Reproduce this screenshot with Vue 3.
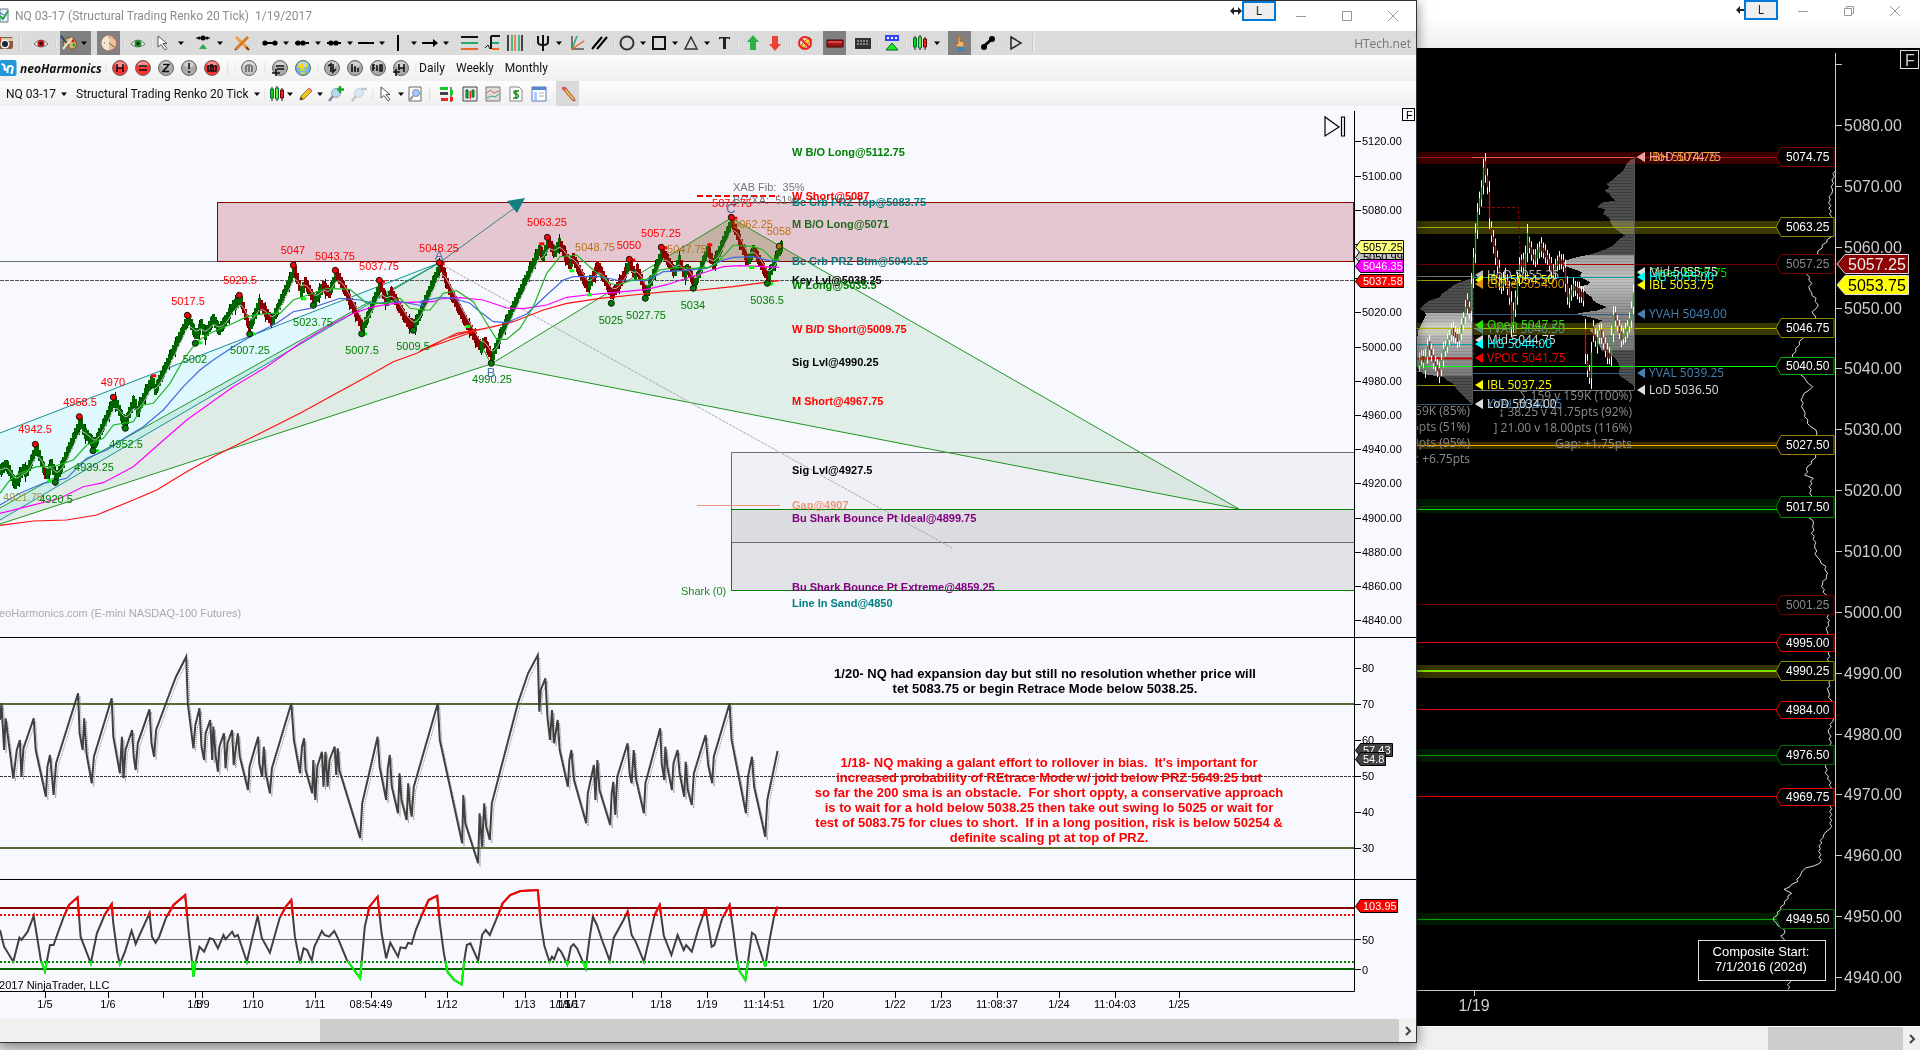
<script setup>
const scale = (raw, ox, oy, sx = 3, sy = 3) =>
  raw.trim().split(/\s+/).map((p) => {
    const [x, y] = p.split(',').map(Number)
    return [+(ox + x / sx).toFixed(1), +(oy + y / sy).toFixed(1)]
  })
const line = (pts) => pts.map((p) => p.join(',')).join(' ')

/* ---------- toolbars ---------- */
const caret = '<path d="M5 6.500h6l-3 3.500z" fill="#000"/>'
const sep = '<path d="M8 -3v22" stroke="#b4b4b4"/><path d="M9 -3v22" stroke="#fff"/>'
const candles = '<path d="M3 1v14M8 0v15M13 2v13" stroke="#111"/><path d="M1.500 3h3v9h-3z" fill="#0d0" stroke="#063"/><path d="M6.500 2h3v11h-3z" fill="#6e3" stroke="#063"/><path d="M11.500 4h3v8h-3z" fill="#e22" stroke="#600"/>'
const eye = (c) => `<path d="M1 9q7-8 14 0q-7 6-14 0z" fill="#fff" stroke="#666"/><circle cx="8" cy="8.500" r="3.600" fill="${c}"/><circle cx="8" cy="8.500" r="1.500" fill="#111"/>`
const nodes = (xs) => `<path d="M1 8h14" stroke="#000" stroke-width="2"/>` + xs.map((x) => `<circle cx="${x}" cy="8" r="2.600"/>`).join('')
const ball = (c, inner, ink = '#111') => `<circle cx="8" cy="8" r="7.500" fill="${c}" stroke="#666"/><ellipse cx="8" cy="4.500" rx="5" ry="3" fill="#fff" opacity=".45"/><g stroke="${ink}" fill="none" stroke-width="1.600">${inner}</g>`
const grayBall = (inner) => ball('#a9a9a9', inner)
const pencil = '<path d="M2 14l1-4 8-8 3 3-8 8z" fill="#f5c518" stroke="#875"/><path d="M2 14l1-3 2 2z" fill="#222"/><path d="M10 3l3 3 1.500-1.500-3-3z" fill="#e77"/>'
const lens = (x) => `<circle cx="8" cy="7" r="4.500" fill="#b6d8f3" stroke="#8aa"/><path d="M5 10l-4 5" stroke="#889" stroke-width="2.500"/>${x}`
const cursor = '<path d="M2 1v11l3-2.500 4 5.500 2-1.500-4-5h4z" fill="#fff" stroke="#555"/>'
const icons = {
  c: caret, s: sep, candles, pencil, cursor,
  camera: '<rect x="-1" y="2" width="15" height="12" rx="2" fill="#8a5a3a"/><path d="M-1 3h15v3h-15z" fill="#d9c7a8"/><circle cx="6" cy="9" r="4.500" fill="#eee"/><circle cx="6" cy="9" r="3" fill="#223"/><path d="M0 2h2v4h-2z" fill="#c33"/>',
  eyeR: eye('#c01818'), eyeG: eye('#189a28'),
  palette: '<path d="M3 5q6-5 11 0q4 7-2 9q-3 1-4-2q-5 1-6-2z" fill="#d9b26a" stroke="#7a5520"/><circle cx="12" cy="6" r="1.500" fill="#c22"/><circle cx="13" cy="10" r="1.500" fill="#2a2"/><path d="M0 1l8 10" stroke="#247" stroke-width="2"/><path d="M2 14l9-11" stroke="#e8e0c0" stroke-width="2"/>',
  disc: '<circle cx="8" cy="8" r="7.500" fill="#e8c79a" stroke="#c66"/><path d="M8 .5a7.500 7.500 0 0 0 0 15z" fill="#f5e6d2"/><path d="M8 8l5 4M8 2v1M3 8h1M12 4l1-1" stroke="#555"/>',
  node: '<path d="M1 3h14" stroke="#000"/><circle cx="4" cy="3" r="1.500"/><circle cx="8" cy="3" r="2.500"/><circle cx="12" cy="3" r="1.500"/><path d="M8 9l4 5H4z" fill="#2aa84a"/>',
  cross: '<path d="M2 2l12 12" stroke="#e6a23c" stroke-width="3"/><path d="M14 2L2 14" stroke="#d97a2b" stroke-width="3"/><path d="M12 12l3 3M2 14l-1 1" stroke="#833" stroke-width="2"/>',
  l1: nodes([3, 13]), l2: nodes([4, 9]), l3: nodes([5, 10]),
  l4: '<path d="M0 8h16" stroke="#000" stroke-width="2"/>',
  vert: '<path d="M8 0v16" stroke="#000" stroke-width="2"/>',
  arrow: '<path d="M0 8h12" stroke="#000" stroke-width="2"/><path d="M11 4l5 4-5 4z"/>',
  hl: '<path d="M0 2h17" stroke="#111" stroke-width="2"/><path d="M0 8h17" stroke="#2a6" stroke-width="2"/><path d="M0 14h17" stroke="#e62" stroke-width="2"/>',
  fib: '<path d="M7 1h9M7 1v13" stroke="#111" stroke-width="2"/><path d="M8 8h7" stroke="#2a6" stroke-width="2"/><path d="M8 14h7" stroke="#e62" stroke-width="2"/><path d="M1 13l3-3 2 4" fill="none" stroke="#111"/>',
  vl: '<path d="M1 0v16M15 0v16" stroke="#111" stroke-width="1.500"/><path d="M5 0v16" stroke="#2a6" stroke-width="1.500"/><path d="M8 0v16" stroke="#e62" stroke-width="1.500"/><path d="M12 0v16" stroke="#2a6" stroke-width="1.500"/>',
  fork: '<path d="M3 1v6q0 3 5 3t5-3V1M8 0v16" fill="none" stroke="#111" stroke-width="2"/>',
  fan: '<path d="M3 1v13h12" fill="none" stroke="#555" stroke-width="1.500"/><path d="M3 14L8 1" stroke="#2a6" stroke-width="1.500"/><path d="M3 14L15 6" stroke="#e62" stroke-width="1.500"/>',
  par: '<path d="M1 14L11 2M6 14L16 2" stroke="#000" stroke-width="2"/>',
  circle: '<circle cx="8" cy="8" r="6.500" fill="none" stroke="#333" stroke-width="2"/>',
  square: '<path d="M2 2h12v12H2z" fill="none" stroke="#111" stroke-width="2"/>',
  tri: '<path d="M8 2l6 12H2z" fill="none" stroke="#333" stroke-width="1.500"/>',
  text: '<path d="M3 2h11v3l-1-1.500H10V14h-3V3.500H4L3 5z" fill="#222"/>',
  up: '<path d="M8 0l6 7h-3v8H5V7H2z" fill="#2fb14a"/>',
  down: '<path d="M8 16l6-7h-3V1H5v8H2z" fill="#ee4035"/>',
  noPen: '<path d="M4 13l1-4 7-7 3 3-7 7z" fill="#fc3" stroke="#a63"/><circle cx="8" cy="8" r="6" fill="none" stroke="#e22" stroke-width="2"/><path d="M4 4l8 8" stroke="#e22" stroke-width="2"/>',
  minus: '<path d="M0 5h16v7H0z" fill="#a01818" stroke="#400"/><path d="M1 6h14v2H1z" fill="#d44"/>',
  meter: '<path d="M0 3h16v11H0z" fill="#333"/><path d="M3 5v6M6 5v6M9 5v6M12 5v6" stroke="#ddd" stroke-dasharray="2 1"/>',
  tri2: '<path d="M1 0h14v6H1z" fill="#34f"/><path d="M3 3h2M7 3h2M11 3h2" stroke="#fff" stroke-width="2"/><path d="M8 8l6 7H2z" fill="#1e1" stroke="#063"/>',
  hand: '<path d="M6 1h2v5l4 1v5H5L3 8l3 1z" fill="#f2b27c" stroke="#a62"/><path d="M5 12h7v4H5z" fill="#38b"/>',
  bone: '<path d="M3 12l9-8" stroke="#000" stroke-width="3"/><circle cx="4" cy="12" r="3"/><circle cx="12" cy="4" r="3"/>',
  play: '<path d="M3 2l10 6-10 6z" fill="none" stroke="#222" stroke-width="1.500"/>',
  logo: '<rect x="-1" y="0" width="17" height="16" rx="2" fill="#2196d8"/><path d="M1 4q4 1 3 4t3 1v4M7 9q0-3 3-3t2 3l-1 5" fill="none" stroke="#fff" stroke-width="2"/>',
  bH: ball('#f33', '<path d="M5 4v8M11 4v8M5 8h6"/>'), bE: ball('#f33', '<path d="M4 6h8M4 10h8"/>'),
  bZ: grayBall('<path d="M5 4.500h6l-6 7h6"/>'), bX: grayBall('<path d="M8 3v6M8 11v2"/>'),
  bC: ball('#f33', '<path d="M4 6h8v5H4zM6 5h3"/><circle cx="8" cy="8.500" r="1.500"/>'),
  bn: ball('#c4c4c4', '<path d="M5 12V7q0-2 3-2t3 2v5M8 6v6"/>', '#666'),
  bG: grayBall('<path d="M4 6h8M5 9h7M0 13h8M4 9v7"/>'),
  bA: ball('#6bb8ee', '<path d="M3 8l2-4 1 4M7 4v4h2M10 4h3M11.500 4v4" stroke="#fd0"/><path d="M5 10h6M6 13h4" stroke="#fd0"/>'),
  b1: grayBall('<path d="M4 6l3-2v8M9 4v8l3-3"/>'), b2: grayBall('<path d="M5 4v8M8 6v6M11 8v4"/>'),
  b3: grayBall('<path d="M3 11V5h2M3 8h2M7 5v6M10 5v6h2V5z"/>'), b4: grayBall('<path d="M6 4v6M11 4v8M6 8h5M0 12h7M3 9v7"/>'),
  zin: lens('<path d="M12 0v7M9 3.500h7" stroke="#1a2" stroke-width="2.500"/>'),
  zout: `<g opacity=".45">${lens('<path d="M10 3h6" stroke="#888" stroke-width="2.500"/>')}</g>`,
  page: '<path d="M2 1h12v14H2z" fill="#fff" stroke="#666"/><circle cx="9" cy="7" r="3.500" fill="#9cf" stroke="#88a"/><path d="M6 10l-3 4" stroke="#889" stroke-width="2"/>',
  ladder: '<path d="M1 1h8v3H1z" fill="#1c2"/><path d="M1 6h8v3H1z" fill="#444"/><path d="M2 12h7v3H2z" fill="#e22"/><path d="M12 1v15" stroke="#111"/><path d="M11 4h3v5h-3z" fill="#1c2"/><path d="M11 11h3v4h-3z" fill="#e22"/>',
  cbox: '<path d="M1 1h14v14H1z" fill="#e8e8e8" stroke="#444"/><path d="M4 4h2v8H4zM10 4h2v7h-2z" fill="#1b2" stroke="#063"/><path d="M7.500 5h1.500v8H7.500z" fill="#e22"/>',
  area: '<path d="M1 1h14v14H1z" fill="#ddd" stroke="#777"/><path d="M2 7l3-3 4 3 5-2" fill="none" stroke="#d55"/><path d="M2 12l4-2 4 1 4-3" fill="none" stroke="#3a6"/>',
  cash: '<path d="M2 1h9l3 3v11H2z" fill="#fff" stroke="#888"/><path d="M11 5H7q-2 1 0 3h2q3 2 0 4H5M8 4v9" fill="none" stroke="#282" stroke-width="1.500"/>',
  panel: '<path d="M1 1h14v14H1z" fill="#fff" stroke="#57b"/><path d="M1 1h14v3H1z" fill="#58c"/><path d="M3 6h3v8H3z" fill="#acf"/><path d="M8 7h5M8 10h5" stroke="#aaa"/>',
  pen2: '<path d="M2 2l3-1 9 11 1 3-3-1z" fill="#f5b53a" stroke="#955"/><path d="M2 2l3-1 2 2-3 2z" fill="#e55"/>',
}
const parse = (s) => s.split(' ').map((t) => {
  const [name, w, on] = t.split(':')
  return { name, w: +w, on: !!on }
})
const drawTools = parse('camera:14 s:12 s:4 eyeR:22 s:8 palette:17:1 c:14:1 s:6 disc:23:1 s:8 eyeG:20 s:8 cursor:16 c:18 s:2 node:22 c:12 s:4 cross:24 s:8 l1:16 c:16 l2:16 c:16 l3:16 c:16 l4:16 c:16 vert:16 c:16 arrow:16 c:16 s:4 hl:22 fib:24 vl:22 s:8 fork:18 c:14 fan:22 par:22 s:8 circle:18 c:14 square:18 c:14 tri:18 c:14 text:20 s:8 up:22 down:22 s:8 noPen:22 s:7 minus:23:1 s:6 meter:22 s:8 tri2:20 s:8 candles:20 c:14 s:4 hand:23:1 s:5 bone:24 s:6 play:20 s:14')
const neoTools = parse('s:6 bH:22 bE:24 bZ:22 bX:24 bC:22 s:10 s:4 bn:24 s:8 bG:22 bA:24 s:6 b1:22 b2:24 b3:22 b4:24 s:6')
const viewTools = parse('s:8 candles:16 c:10 pencil:22 c:6 zin:26 zout:20 s:8 cursor:20 c:8 page:20 s:10 ladder:24 cbox:22 area:24 cash:22 panel:24 s:5 pen2:23:1')

/* ---------- price panel ---------- */
const priceTicks = Array.from({ length: 15 }, (_, i) => 5120 - i * 20).map((p) => ({ p: p.toFixed(2), y: Math.round(620.3 - (p - 4840) * 1.71) }))
const swing = scale('0,900 15,885 25,905 41,945 65,900 75,910 106,835 135,920 150,885 165,925 185,880 238,755 250,790 280,825 300,780 340,690 365,750 375,755 398,690 408,725 452,630 462,660 480,620 562,445 585,500 600,465 612,495 635,450 655,480 680,440 695,410 718,390 745,475 775,400 812,455 880,300 900,370 912,340 940,395 965,350 985,370 1006,310 1085,475 1138,345 1155,400 1170,370 1220,460 1242,465 1318,285', 0, 170)
  .concat(scale('148,340 190,420 240,505 250,485 272,535 300,460 415,210 425,230 442,185 460,220 475,190 505,255 515,235 560,325 590,260 632,345 650,320 688,250 700,290 708,270 735,340 784,215 820,280 835,240 850,290 860,265 880,315 920,210 937,255 992,125 1040,245 1058,210 1100,295 1138,205', 400, 180))
const bricks = []
for (let x = 0; x < 781; x += 2) {
  let i = swing.findIndex((p) => p[0] > x)
  if (i < 1) i = swing.length - 1
  const [x0, y0] = swing[i - 1]
  const [x1, y1] = swing[i]
  const y = Math.round(y0 + ((y1 - y0) * (x - x0)) / (x1 - x0))
  const down = (x > 240 || x === 44) && y1 > y0
  const wick = (x * 7) % 10 > 5 ? 8 : 5
  bricks.push({ x, y: y - 6, c: down ? '#8b0000' : x > 590 && x < 625 ? '#8b0000' : '#006400', wick, mid: y })
}
let ema = bricks[0].mid
const emaLine = bricks.map((b) => { ema += (b.mid - ema) * 0.3; return [b.x, ema.toFixed(1)] })
const averages = [
  ['#ff1010', '0,1066 100,1053 200,1050 290,1035 400,990 470,960 560,905 650,855 710,825 800,780 900,730 1000,675 1100,620 1180,575 1250,550 1310,520 1370,490 1440,478', '60,512 140,475 200,457 280,440 340,425 430,390 500,370 600,355 700,345 800,335 900,330 1000,320 1090,308 1138,302'],
  ['#ff00ff', '0,1030 80,1010 180,985 250,950 310,938 400,890 480,820 560,750 700,650 800,590 900,520 1000,460 1060,430 1120,410 1200,398 1300,395', '120,357 180,353 250,360 320,384 370,386 440,375 500,352 560,345 640,338 740,328 800,314 860,295 920,275 970,260 1020,257 1138,262'],
  ['#4169e1', '0,1005 60,970 130,940 200,925 260,865 320,840 380,800 430,770 490,720 550,650 600,600 640,570 700,530 760,495 830,460 880,425 930,415 1020,385 1080,390 1120,400 1200,395 1270,408', '60,365 120,352 160,355 210,370 240,395 280,425 320,428 380,402 440,345 490,300 520,290 600,290 650,300 740,302 790,275 850,272 920,265 970,240 1000,232 1060,230 1120,245 1138,243'],
  ['#1fb41f', '0,970 30,930 60,910 110,890 160,890 220,870 260,825 310,805 340,765 400,755 430,705 460,700 510,640 550,570 590,515 630,490 700,460 740,440 800,430 840,430 880,390 940,370 980,355 1050,358 1100,400 1160,400 1200,385 1230,415 1270,420', '90,390 130,340 170,332 220,365 260,430 290,478 320,478 360,445 400,380 440,280 480,230 530,225 580,270 630,310 650,315 700,300 740,298 780,270 830,262 880,265 930,262 960,240 1000,195 1060,200 1090,210 1120,240 1138,238'],
].map(([c, a, b]) => ({ c, pts: line(scale(a, 0, 170).concat(scale(b, 400, 180))) }))
const dots = [
  ['#f00', '562,436 718,376 880,286 1006,301 1138,331 1318,278 340,682 238,740 106,823', 0, 170],
  ['#008000', '166,937 279,842 376,775 586,520 749,492 940,406 1085,491 1240,481', 0, 170],
  ['#f00', '442,172 688,238 784,202 994,112', 400, 180],
  ['#008000', '274,550 634,370 736,355 880,325 1102,310', 400, 180],
  ['#b8700b', '1138,199', 400, 180],
].flatMap(([c, s, ox, oy]) => scale(s, ox, oy).map(([x, y]) => ({ c, x, y })))
const specks = [
  ['#f00', '460,616 566,437 1146,334 1325,279', 0, 170], ['#0f0', '910,385 148,931 598,517 757,490 1092,490 370,769 288,841', 0, 170],
  ['#f00', '424,190 928,193 1003,113 793,202 697,239', 400, 180], ['#0f0', '202,438 514,271 567,343 1054,261 1110,310', 400, 180],
].flatMap(([c, s, ox, oy]) => scale(s, ox, oy).map(([x, y]) => ({ c, x, y })))
const R = '#f00', G = '#008000', O = '#b8731a'
const swingLabels = [
  ['5017.5', 188, 305, R], ['5029.5', 240, 284, R], ['5047', 293, 254, R], ['5043.75', 335, 260, R], ['5037.75', 379, 270, R], ['5048.25', 439, 252, R],
  ['4970', 113, 386, R], ['4958.5', 80, 406, R], ['4942.5', 35, 433, R], ['4921.75', 23, 501, '#a8963a'], ['4920.5', 56, 503, G], ['4939.25', 94, 471, G],
  ['4952.5', 126, 448, G], ['5002', 195, 363, G], ['5007.25', 250, 354, G], ['5023.75', 313, 326, G], ['5007.5', 362, 354, G], ['5009.5', 413, 350, G], ['4990.25', 492, 383, G],
  ['5063.25', 547, 226, R], ['5048.75', 595, 251, O], ['5050', 629, 249, R], ['5057.25', 661, 237, R], ['5047.75', 687, 253, O], ['5074.75', 732, 207, R],
  ['5062.25', 753, 228, O], ['5058', 779, 235, O], ['5025', 611, 324, G], ['5027.75', 646, 319, G], ['5034', 693, 309, G], ['5036.5', 767, 304, G],
]
const levels = [
  ['W B/O Long@5112.75', 156, G], ['Bc Crb PRZ Top@5083.75', 206, '#008080'], ['W Short@5087', 200, R], ['M B/O Long@5071', 228, '#1e6b1e'], ['Bc Crb PRZ Btm@5049.25', 265, '#11787d'],
  ['Key Lvl@5038.25', 284, '#000'], ['W Long@5035.5', 289, G], ['W B/D Short@5009.75', 333, R], ['Sig Lvl@4990.25', 366, '#000'], ['M Short@4967.75', 405, R], ['Sig Lvl@4927.5', 474, '#000'],
  ['Gap@4907', 509, '#e9967a'], ['Bu Shark Bounce Pt Ideal@4899.75', 522, '#800080'], ['Bu Shark Bounce Pt Extreme@4859.25', 591, '#800080'], ['Line In Sand@4850', 607, '#008080'],
]
const tags = [
  { t: '5050.99', y: 257, w: 49, bg: '#c0c0c0', fg: '#000' }, { t: '5057.25', y: 247, w: 49, bg: '#ffff80', fg: '#000' }, { t: '5046.35', y: 266, w: 49, bg: '#ff00ff', fg: '#fff' },
  { t: '5037.58', y: 281, w: 49, bg: '#f00', fg: '#fff' }, { t: '57.43', y: 750, w: 38, bg: '#404040', fg: '#fff' }, { t: '54.8', y: 759, w: 31, bg: '#404040', fg: '#fff' }, { t: '103.95', y: 906, w: 43, bg: '#f00', fg: '#fff' },
]

/* ---------- oscillators ---------- */
const rsi = line(scale('0,240 3,190 8,330 11,235 26,415 33,330 39,300 42,410 46,325 66,235 70,330 90,470 93,380 98,345 105,465 110,370 153,160 156,280 162,330 165,235 170,345 180,430 184,350 219,175 222,290 235,400 239,290 242,415 246,330 259,270 262,350 266,390 270,310 293,208 297,310 302,350 306,270 335,150 345,110 365,50 368,190 379,325 383,255 391,205 395,320 400,360 403,280 412,240 416,360 418,260 423,350 427,395 430,320 439,280 442,385 446,310 455,270 458,375 466,280 470,350 486,450 489,380 506,290 508,370 514,410 517,320 521,400 529,460 533,385 571,190 576,300 588,400 592,320 596,295 599,390 612,460 614,360 618,480 622,380 631,335 634,440 638,335 642,440 646,360 656,320 659,405 662,325 665,390 706,595 710,490 740,290 744,380 757,480 760,385 764,345 768,440 780,520 783,400 787,480 797,540 800,430 803,490 807,530 811,440 858,190 862,300 906,610 908,465 912,550 937,670 940,520 945,620 949,490 953,560 960,600 964,490 1015,190 1035,100 1054,45 1057,215 1060,150 1069,115 1073,230 1078,300 1082,210 1086,310 1093,240 1097,330 1113,440 1116,360 1120,330 1125,420 1149,550 1152,460 1164,375 1167,480 1171,360 1175,450 1196,555 1199,460 1202,425 1206,525 1210,410 1230,310 1234,400 1238,430 1242,330 1247,420 1262,520 1265,430 1294,265 1297,370 1302,420 1304,320 1308,380 1317,450 1320,370 1328,330 1332,400 1341,470 1344,365 1348,450 1356,495 1360,400 1383,285 1388,375 1396,430 1399,350 1430,190 1434,300 1462,520 1466,410 1474,350 1478,440 1500,590 1504,480 1524,333', 0, 640, 1.96, 3))
const stoch = line(scale('0,870 8,920 26,965 38,893 42,900 54,875 66,828 80,960 88,993 98,915 105,915 112,885 125,830 135,795 152,772 158,890 178,970 190,880 205,825 219,792 222,850 230,938 235,972 245,935 258,872 266,912 275,880 293,820 298,890 305,908 312,890 325,835 340,795 363,765 370,880 376,960 379,1010 383,970 391,920 400,935 411,895 418,898 427,925 438,885 442,898 455,875 460,890 466,885 484,965 495,890 505,828 513,893 529,938 548,835 560,800 571,780 578,890 588,970 595,925 602,930 611,962 616,920 631,873 636,885 645,890 655,873 661,890 680,960 706,1015 715,860 724,800 740,770 748,880 757,955 765,908 780,950 785,922 795,925 800,908 807,912 815,870 827,825 840,780 857,767 862,850 870,940 877,995 890,1020 905,1033 910,960 915,915 922,910 937,962 945,885 952,870 960,885 975,830 985,790 1000,765 1020,753 1054,750 1060,850 1067,918 1077,965 1082,950 1086,958 1094,925 1100,935 1112,973 1119,920 1124,913 1131,925 1148,985 1155,900 1162,830 1170,855 1180,900 1195,962 1203,893 1222,840 1230,815 1238,885 1246,905 1262,965 1275,880 1283,825 1293,795 1301,887 1316,945 1328,885 1340,930 1345,915 1356,935 1368,870 1383,805 1395,920 1400,915 1415,838 1430,795 1437,870 1443,940 1448,990 1461,1020 1466,965 1474,878 1480,885 1500,980 1507,910 1517,830 1524,800', 0, 640, 1.96, 3))
const rsiTicks = [80, 70, 60, 50, 40, 30].map((v) => ({ v, y: 848 - (v - 30) * 3.6 }))
const timeTicks = [
  [45, '1/5'], [108, '1/6'], [163, ''], [195, '1/8'], [202, '1/9'], [253, '1/10'], [315, '1/11'], [371, '08:54:49'], [425, ''], [447, '1/12'], [503, ''], [525, '1/13'], [560, '1/15'], [567, '1/16'],
  [575, '1/17'], [632, ''], [661, '1/18'], [707, '1/19'], [764, '11:14:51'], [823, '1/20'], [895, '1/22'], [941, '1/23'], [997, '11:08:37'], [1059, '1/24'], [1115, '11:04:03'], [1179, '1/25'],
]
const noteBlack = ['1/20- NQ had expansion day but still no resolution whether price will', 'tet 5083.75 or begin Retrace Mode below 5038.25.']
const noteRed = ["1/18- NQ making a galant effort to rollover in bias.\u00a0 It's important for", 'increased probability of REtrace Mode w/ jold below PRZ 5649.25 but', 'so far the 200 sma is an obstacle.\u00a0 For short oppty, a conservative approach', 'is to wait for a hold below 5038.25 then take out swing lo 5025 or wait for', 'test of 5083.75 for clues to short.\u00a0 If in a long position, risk is below 50254 &', 'definite scaling pt at top of PRZ.']

/* ---------- market profile window ---------- */
const darkTicks = Array.from({ length: 15 }, (_, i) => 5080 - i * 10).map((p) => ({ p: p.toFixed(2), y: Math.round(125 + (5080 - p) * 6.085) }))
const bands = [[152, 12, '#3f0000'], [221, 13, '#3f3f00'], [323, 12, '#3f3f00'], [442, 7, '#3f3300'], [499, 14, '#001e00'], [665, 13, '#3c3a00'], [749, 13, '#001e00'], [913, 12, '#001e00']]
const rules = [[157, '#b01010'], [227, '#a5a500'], [264, '#700000'], [328, '#b5b500'], [366, '#00ff00'], [445, '#ffa500'], [506, '#004c00'], [509, '#00e000'], [604, '#700000'], [642, '#f00000'], [670, '#60f000'], [671, '#a0d000'], [709, '#f00000'], [755, '#009c00'], [796, '#f00000'], [919, '#00a800']]
const flags = [
  ['5074.75', 157, 19, '#8b0000', '#fff'], ['5063.25', 227, 19, '#8b8b00', '#fff'], ['5057.25', 264, 19, '#700000', '#8a8a8a'], ['5046.75', 328, 19, '#8b8b00', '#fff'], ['5040.50', 366, 17, '#00b000', '#fff'],
  ['5027.50', 445, 19, '#a08000', '#fff'], ['5017.50', 507, 21, '#008c00', '#fff'], ['5001.25', 605, 19, '#700000', '#8a8a8a'], ['4995.00', 643, 17, '#f00000', '#fff'], ['4990.25', 671, 19, '#8b8b00', '#fff'],
  ['4984.00', 710, 17, '#f00000', '#fff'], ['4976.50', 755, 19, '#007000', '#fff'], ['4969.75', 797, 17, '#f00000', '#fff'], ['4949.50', 919, 19, '#007000', '#fff'],
].map(([t, y, h, c, fg]) => ({ t, y, c, fg, d: `M1834 ${y - h / 2}H1781L1776 ${y}L1781 ${y + h / 2}H1834Z` }))
const interp = (pts, y) => {
  const i = pts.findIndex((p) => p[1] >= y)
  if (i < 1) return pts[0][0]
  const [x0, y0] = pts[i - 1], [x1, y1] = pts[i]
  return y1 === y0 ? x1 : x0 + ((x1 - x0) * (y - y0)) / (y1 - y0)
}
const profile = (raw, right, va, vb) => {
  const pts = scale(raw, 1410, 130)
  const rows = []
  for (let y = Math.ceil(pts[0][1]); y < pts[pts.length - 1][1]; y += 1) {
    const x = Math.round(interp(pts, y))
    const lit = y > va && y < vb
    const near = lit ? Math.max(0, 1 - Math.abs(y - (va + (vb - va) * 0.25)) / 45) : 0
    const v = Math.round((lit ? 125 + near * 70 : 78) - (y % 3 === 0 ? 16 : 0))
    rows.push({ y, x, w: right - x, c: `rgb(${v},${v},${v})` })
  }
  return rows
}
const profiles = [
  ...profile('665,85 650,100 640,120 615,140 605,150 590,160 598,170 585,180 597,190 605,200 615,210 575,217 562,230 585,237 580,250 598,262 600,270 610,290 630,305 645,315 630,325 610,345 590,355 560,365 540,372 500,380 465,390 460,404 475,410 490,415 515,425 510,435 520,445 540,455 535,462 500,470 520,478 530,490 545,500 550,510 565,520 590,530 560,540 505,548 505,553 540,560 575,570 560,580 550,590 540,600 550,610 560,620 565,640 575,660 600,670 620,690 630,710 625,730 635,740 650,750 670,765 673,780', 1634, 254, 350),
  ...profile('180,445 150,455 130,465 110,480 95,490 90,500 60,510 45,520 28,535 45,545 48,555 40,570 35,580 25,600 22,620 22,710 40,730 100,740 110,750 130,760 140,775 155,790 170,805 185,820', 1472, 312, 376),
]
const path2 = scale('25,700 35,680 45,700 55,640 70,690 88,730 100,670 125,600 145,630 160,570 170,520 180,550 187,440 195,340 205,230 215,180 223,100 235,180 240,290 250,340 262,400 272,470 285,440 300,500 305,590 318,500 330,400 345,400 352,330 372,390 392,350 410,380 430,430 445,390 460,400 475,510 490,470 520,500 527,690 541,750 548,600 560,640 570,600 590,670 600,680 612,550 635,625 650,600 662,560 673,480', 1410, 130)
const candles2 = []
for (let x = 1419; x <= 1634; x += 2) {
  let i = path2.findIndex((p) => p[0] > x)
  if (i < 1) i = path2.length - 1
  const [x0, y0] = path2[i - 1], [x1, y1] = path2[i]
  const k = (y1 - y0) / (x1 - x0)
  const y = y0 + k * (x - x0)
  const h = Math.min(36, Math.max(7, Math.abs(k) * 2.5)) + ((x * 5) % 7)
  candles2.push({ x: x + 0.5, y, h, c: k < 0 ? '#00d000' : '#f00000' })
}
const marks = [
  ['IBH 5074.75', 157, 1, '#ffa500'], ['HoD 5074.75', 157, 1, '#e8a0a0'], ['Open 5055.75', 273, 1, '#00e000'], ['Mid 5055.75', 272, 1, '#ddd'], ['HG 5055.00', 277, 1, '#00ffff'], ['IBL 5053.75', 285, 1, '#ffff00'],
  ['YVAH 5049.00', 314, 1, '#4682b4'], ['YVAL 5039.25', 373, 1, '#4682b4'], ['LoD 5036.50', 390, 1, '#ddd'],
  ['HoD 5055.25', 275, 0, '#bbb'], ['IBH 5054.50', 280, 0, '#ffff00'], ['Close 5054.00', 284, 0, '#e09010'], ['YVAH 5046.50', 329, 0, '#5c8a8a'], ['Open 5047.25', 325, 0, '#30e000'], ['Mid 5044.75', 340, 0, '#ddd'],
  ['HG 5044.00', 344, 0, '#00ffff'], ['VPOC 5041.75', 358, 0, '#f00'], ['IBL 5037.25', 385, 0, '#ffff00'], ['YVAL 5034.25', 404, 0, '#4682b4'], ['LoD 5034.00', 404, 0, '#ddd'],
].map(([t, y, right, c]) => ({ t, y, c, x: right ? 1637 : 1475 }))
const stats = [
  ['∑ 159 v 159K (100%)', 1632, 400], ['↨ 38.25 v 41.75pts (92%)', 1632, 416], ['] 21.00 v 18.00pts (116%)', 1632, 432], ['Gap: +1.75pts', 1632, 448],
  ['59K (85%)', 1470, 415], ['5pts (51%)', 1470, 431], ['0pts (95%)', 1470, 447], [': +6.75pts', 1470, 463],
]
const composite = line(scale('1276,112 1270,140 1265,180 1258,210 1262,260 1262,320 1240,345 1220,372 1192,432 1203,460 1196,480 1215,505 1222,525 1210,545 1215,560 1176,625 1160,655 1145,683 1170,735 1190,750 1205,770 1175,800 1178,840 1195,880 1215,900 1218,912 1220,975 1195,1010 1187,1035 1207,1045', 1410, 130)
  .concat(scale('1200,120 1203,145 1200,200 1213,215 1207,240 1217,270 1218,300 1245,325 1252,350 1235,370 1245,398 1252,450 1257,470 1248,490 1258,500 1260,543 1253,570 1262,618 1252,645 1262,670 1268,716 1258,745 1262,785 1250,833 1248,855 1260,880 1262,895 1262,1000 1238,1015 1228,1050 1232,1088 1190,1100 1170,1115 1160,1135 1125,1155 1142,1165 1115,1200 1100,1220 1088,1235 1115,1255 1127,1260 1115,1275 1125,1283 1145,1392 1135,1400 1137,1412', 1410, 440, 3, 2.57))
  .flatMap((p, i, a) => {
    if (!i) return [p]
    const q = a[i - 1]
    const n = Math.max(1, Math.round(Math.abs(p[1] - q[1]) / 3))
    return Array.from({ length: n }, (_, k) => [+(q[0] + ((p[0] - q[0]) * (k + 1)) / n + ((k + i) % 2 ? 1 : -1)).toFixed(1), +(q[1] + ((p[1] - q[1]) * (k + 1)) / n).toFixed(1)])
  }))
</script>

<template>
  <main class="desktop">
    <section class="win front">
      <header class="titlebar">
        <svg class="app" viewBox="0 0 10 16" width="10" height="16"><path d="M0 1h8v13H0z" fill="#e8f0fa" stroke="#678" /><path d="M0 8l3 3 5-8" fill="none" stroke="#2a4" stroke-width="2" /><path d="M0 5l4 2" stroke="#26c" /></svg>
        <h1>NQ 03-17 (Structural Trading Renko 20 Tick)&nbsp; 1/19/2017</h1>
        <div class="controls">
          <span class="link"><svg viewBox="0 0 12 8" width="12" height="8"><path d="M0 4l4-4v3h4V0l4 4-4 4V5H4v3z" fill="#222" /></svg><button class="l">L</button></span>
          <button aria-label="Minimize"><svg viewBox="0 0 12 12" width="12" height="12"><path d="M1 6.500h10" stroke="#999" /></svg></button>
          <button aria-label="Maximize"><svg viewBox="0 0 12 12" width="12" height="12"><path d="M1.500 1.500h9v9h-9z" fill="none" stroke="#999" /></svg></button>
          <button aria-label="Close"><svg viewBox="0 0 12 12" width="12" height="12"><path d="M1 1l10 10M11 1L1 11" stroke="#999" /></svg></button>
        </div>
      </header>
      <nav class="bar draw">
        <template v-for="(t, i) in drawTools" :key="i">
          <svg v-if="t.name === 's'" class="sep" viewBox="0 0 16 16" :style="{ width: t.w + 'px' }" v-html="icons.s" />
          <button v-else :class="{ on: t.on }" :style="{ width: t.w + 'px' }" :aria-label="t.name"><svg viewBox="0 0 16 16" v-html="icons[t.name]" /></button>
        </template>
        <a href="#" class="site">HTech.net</a>
      </nav>
      <nav class="bar">
        <svg class="logo" viewBox="0 0 16 16" v-html="icons.logo" />
        <strong class="brand">neoHarmonics</strong>
        <template v-for="(t, i) in neoTools" :key="i">
          <svg v-if="t.name === 's'" class="sep" viewBox="0 0 16 16" :style="{ width: t.w + 'px' }" v-html="icons.s" />
          <button v-else :style="{ width: t.w + 'px' }" :aria-label="t.name"><svg viewBox="0 0 16 16" v-html="icons[t.name]" /></button>
        </template>
        <div class="periods"><button>Daily</button><button>Weekly</button><button>Monthly</button></div>
      </nav>
      <nav class="bar last">
        <button class="pick sym">NQ 03-17<svg viewBox="0 0 16 16" v-html="icons.c" /></button>
        <button class="pick tpl">Structural Trading Renko 20 Tick<svg viewBox="0 0 16 16" v-html="icons.c" /></button>
        <template v-for="(t, i) in viewTools" :key="i">
          <svg v-if="t.name === 's'" class="sep" viewBox="0 0 16 16" :style="{ width: t.w + 'px' }" v-html="icons.s" />
          <button v-else :class="{ lite: t.on }" :style="{ width: t.w + 'px' }" :aria-label="t.name"><svg viewBox="0 0 16 16" v-html="icons[t.name]" /></button>
        </template>
      </nav>

      <svg class="chart" viewBox="0 106 1416 913">
        <defs>
          <clipPath id="hot"><rect x="0" y="880" width="1354" height="36" /></clipPath>
          <clipPath id="cold"><rect x="0" y="961" width="1354" height="28" /></clipPath>
        </defs>
        <!-- harmonic patterns and zones -->
        <path d="M0 433L439 263L0 520Z" fill="#dff8fe" />
        <path d="M0 508L439 263L491 364L0 524Z" fill="#dfece5" />
        <path d="M0 508L439 263L0 520Z" fill="#c9ece6" />
        <path d="M491 364L731 218L1239 509Z" fill="#dfeee6" />
        <rect x="731" y="452" width="623" height="57" fill="#8a8a9a" fill-opacity=".07" />
        <rect x="731" y="509" width="623" height="33" fill="#dcdde0" />
        <rect x="731" y="542" width="623" height="48" fill="#e1e2e5" />
        <path d="M1354 452.500H731.500V542M731 542.500H1354" fill="none" stroke="#6c6c6c" />
        <path d="M731 509.500H1354M731.500 542V590.500H1354" fill="none" stroke="#008000" />
        <rect x="217.500" y="202.500" width="1136" height="59" fill="#a82840" fill-opacity=".24" stroke="#8b0000" />
        <path d="M0 261.500H217" stroke="#6b7078" />
        <path d="M0 280.500H1354" stroke="#555" stroke-dasharray="4 1" />
        <path d="M697 505.500H780" stroke="#e9967a" />
        <path d="M697 196H779" stroke="#f00" stroke-width="2" stroke-dasharray="6 3" />
        <g fill="none" stroke="#219421">
          <path d="M0 508L439 263L491 364L0 524" /><path d="M491 364L731 218L1239 509Z" />
        </g>
        <g fill="none" stroke="#159090"><path d="M0 433L439 263L0 520" /><path d="M439 263L516 207" stroke="#3a8488" /></g>
        <path d="M507 201L525 198L517 213Z" fill="#128080" />
        <path d="M439 263L952 548" stroke="#aaa" stroke-dasharray="3 1" />
        <!-- renko bricks -->
        <g v-for="b in bricks" :key="b.x">
          <path v-if="b.x % 6 === 0" :d="`M${b.x + 1.5} ${b.mid - b.wick - 2}v${b.wick * 2 + 4}`" stroke="#111" />
          <rect :x="b.x" :y="b.y" width="3" height="11" :fill="b.c" />
        </g>
        <polyline :points="line(emaLine)" fill="none" stroke="#b8b8b8" />
        <path d="M731 218L780 246L806 261H660Z" fill="#8a7a30" fill-opacity=".18" />
        <polyline v-for="a in averages" :key="a.c" :points="a.pts" fill="none" :stroke="a.c" stroke-width="1.200" />
        <rect v-for="(s, i) in specks" :key="'s' + i" :x="s.x - 2" :y="s.y - 1" width="5" height="3" :fill="s.c" />
        <circle v-for="(d, i) in dots" :key="'d' + i" :cx="d.x" :cy="d.y" r="3" :fill="d.c" stroke="#111" />
        <text v-for="(l, i) in swingLabels" :key="'w' + i" :x="l[1]" :y="l[2]" :fill="l[3]" text-anchor="middle">{{ l[0] }}</text>
        <g class="letter" fill="#4a72a8" text-anchor="middle"><text x="439" y="260">A</text><text x="491" y="377">B</text><text x="731" y="213">C</text></g>
        <g fill="#777"><text x="733" y="191">XAB Fib:&nbsp; 35%</text><text x="733" y="204">BC/XA:&nbsp; 51%</text></g>
        <text v-for="l in levels" :key="l[0]" x="792" :y="l[1]" :fill="l[2]" class="b">{{ l[0] }}</text>
        <text x="681" y="595" fill="#1f8a1f">Shark (0)</text>
        <text x="-7" y="617" fill="#a9a9ad">neoHarmonics.com (E-mini NASDAQ-100 Futures)</text>
        <path d="M1325 117V136L1339 127ZM1341.500 117h3v19h-3z" fill="none" stroke="#000" stroke-width="1.200" />
        <rect x="1402.500" y="108.500" width="12" height="12" fill="none" stroke="#000" /><text x="1406" y="119">F</text>

        <!-- RSI -->
        <path d="M0 704H1354M0 848H1354" stroke="#556b2f" stroke-width="2" />
        <path d="M0 776.500H1354" stroke="#333" stroke-dasharray="3 1" />
        <polyline :points="rsi" fill="none" stroke="#888" stroke-dasharray="1 1" transform="translate(2 3)" />
        <polyline :points="rsi" fill="none" stroke="#404040" stroke-width="2" />
        <g class="note b" text-anchor="middle"><text v-for="(n, i) in noteBlack" :key="i" x="1045" :y="678 + i * 15">{{ n }}</text></g>
        <g class="note b" text-anchor="middle" fill="#f00"><text v-for="(n, i) in noteRed" :key="i" x="1049" :y="767 + i * 15">{{ n }}</text></g>

        <!-- stochastic -->
        <path d="M0 939.500H1354" stroke="#6c6672" />
        <path d="M0 908H1354" stroke="#8b0000" stroke-width="2" />
        <path d="M0 915H1354" stroke="#f00" stroke-width="2" stroke-dasharray="2 2" />
        <path d="M0 962H1354" stroke="#008000" stroke-width="2" stroke-dasharray="2 2" />
        <path d="M0 969H1354" stroke="#006400" stroke-width="2" />
        <g fill="none" stroke-width="2"><polyline :points="stoch" stroke="#404040" /><polyline :points="stoch" stroke="#f00" clip-path="url(#hot)" /><polyline :points="stoch" stroke="#0f0" clip-path="url(#cold)" /></g>
        <text x="-9" y="989">©2017 NinjaTrader, LLC</text>

        <!-- axes -->
        <path d="M0 637.500H1416M0 879.500H1416M0 991.500H1354.500V111" fill="none" stroke="#000" />
        <g v-for="t in priceTicks" :key="t.p"><path :d="`M1355 ${t.y + 0.5}h6`" stroke="#000" /><text x="1362" :y="t.y + 4">{{ t.p }}</text></g>
        <g v-for="t in rsiTicks" :key="t.v"><path :d="`M1355 ${Math.round(t.y) + 0.5}h6`" stroke="#000" /><text x="1362" :y="t.y + 4">{{ t.v }}</text></g>
        <path d="M1355 939.500h6M1355 969.500h6" stroke="#000" /><text x="1362" y="944">50</text><text x="1362" y="974">0</text>
        <g v-for="t in timeTicks" :key="t[0]"><path :d="`M${t[0] + 0.5} 992v6`" stroke="#000" /><text :x="t[0]" y="1008" text-anchor="middle">{{ t[1] }}</text></g>
        <g v-for="t in tags" :key="t.t"><path :d="`M1355.500 ${t.y + 0.5}l5 -7h${t.w - 6}v13h${6 - t.w}z`" :fill="t.bg" stroke="#000" /><text x="1363" :y="t.y + 4" :fill="t.fg">{{ t.t }}</text></g>
      </svg>
      <div class="scroll main-scroll"><span class="thumb" /><button aria-label="Scroll right"><svg viewBox="0 0 8 10" width="8" height="10"><path d="M2 1l4 4-4 4" fill="none" stroke="#444" stroke-width="2" /></svg></button></div>
    </section>

    <section class="win back">
      <header class="titlebar">
        <div class="controls">
          <span class="link"><svg viewBox="0 0 8 8" width="8" height="8"><path d="M0 4l4-4v3h4v2H4v3z" fill="#222" /></svg><button class="l">L</button></span>
          <button aria-label="Minimize"><svg viewBox="0 0 12 12" width="12" height="12"><path d="M1 6.500h10" stroke="#999" /></svg></button>
          <button aria-label="Restore"><svg viewBox="0 0 12 12" width="12" height="12"><path d="M1.500 3.500h7v7h-7zM3.500 3.500v-2h7v7h-2" fill="none" stroke="#999" /></svg></button>
          <button aria-label="Close"><svg viewBox="0 0 12 12" width="12" height="12"><path d="M1 1l10 10M11 1L1 11" stroke="#999" /></svg></button>
        </div>
      </header>
      <nav class="strip" />
      <svg class="chart dark" viewBox="1417 48 503 978">
        <rect v-for="(p, i) in profiles" :key="'p' + i" :x="p.x" :y="p.y" :width="p.w" height="1" :fill="p.c" />
        <rect v-for="b in bands" :key="'b' + b[0]" x="1417" :y="b[0]" width="362" :height="b[1]" :fill="b[2]" fill-opacity=".9" class="glow" />
        <path v-for="r in rules" :key="'r' + r[0]" :d="`M1417 ${r[0] + 0.5}H1779`" :stroke="r[1]" />
        <g fill="none">
          <path d="M1472 157.500H1634" stroke="#ff6030" /><path d="M1472 264.500H1634" stroke="#b00000" />
          <path d="M1417 358.500H1472" stroke="#c00000" stroke-width="2" /><path d="M1417 344.500H1472M1472 277.500H1634" stroke="#00a0a0" />
          <path d="M1417 280.500H1461M1417 385.500H1455" stroke="#a0a000" /><path d="M1417 276.500H1472M1472 390.500H1634M1417 371.500H1472" stroke="#777" />
          <path d="M1472 314.500H1634M1472 373.500H1634M1417 404.500H1472" stroke="#345f85" />
          <path d="M1482 207.500H1518.500L1520 255M1473.500 262V358" stroke="#a00000" stroke-dasharray="3 2" />
          <path d="M1472.500 275V404M1634.500 157V390" stroke="#555" />
        </g>
        <g v-for="c in candles2" :key="c.x"><path :d="`M${c.x} ${c.y - c.h / 2 - 4}v${c.h + 8}`" stroke="#fff" /><path :d="`M${c.x} ${c.y - c.h / 3}v${c.h / 1.5}`" :stroke="c.c" stroke-width="1.300" /></g>
        <g class="mark">
          <text v-for="s in stats" :key="s[0]" :x="s[1]" :y="s[2]" text-anchor="end" fill="#8c8c8c">{{ s[0] }}</text>
          <g v-for="m in marks" :key="m.t" :fill="m.c"><path :d="`M${m.x} ${m.y}l8 -5v10z`" /><text :x="m.x + 12" :y="m.y + 4">{{ m.t }}</text></g>
        </g>
        <polyline :points="composite" fill="none" stroke="#ddd" />
        <g class="flag"><g v-for="f in flags" :key="f.t"><path :d="f.d" fill="#000" :stroke="f.c" /><text x="1786" :y="f.y + 4" :fill="f.fg">{{ f.t }}</text></g></g>
        <path d="M1835.500 53V990.500H1417M1836 64.500h6M1474.500 991v5" fill="none" stroke="#ccc" />
        <g class="big" fill="#ccc">
          <g v-for="t in darkTicks" :key="t.p"><path :d="`M1836 ${t.y + 0.5}h6`" stroke="#ccc" /><text x="1844" :y="t.y + 6">{{ t.p }}</text></g>
          <text x="1474" y="1011" text-anchor="middle">1/19</text>
          <path d="M1837 264L1845 254.500H1908.500V273.500H1845Z" fill="#8b0000" stroke="#ddd" /><text x="1848" y="270" fill="#eee">5057.25</text>
          <path d="M1837 285L1845 275.500H1908.500V294.500H1845Z" fill="#ff0" stroke="#ddd" /><text x="1848" y="291" fill="#000">5053.75</text>
          <rect x="1900.500" y="50.500" width="18" height="18" fill="none" stroke="#ddd" /><text x="1905" y="66">F</text>
        </g>
        <rect x="1698.500" y="940.500" width="127" height="40" fill="#000" stroke="#ddd" />
        <g class="comp" fill="#fff" text-anchor="middle"><text x="1761" y="956">Composite Start:</text><text x="1761" y="971">7/1/2016 (202d)</text></g>
      </svg>
      <div class="scroll side-scroll"><span class="thumb" /><button aria-label="Scroll right"><svg viewBox="0 0 8 10" width="8" height="10"><path d="M2 1l4 4-4 4" fill="none" stroke="#444" stroke-width="2" /></svg></button></div>
    </section>
  </main>
</template>

<style>
body { margin: 0; background: #dcdcdc; }
</style>
<style scoped>
.desktop { display: grid; grid-template-columns: minmax(0, 1417fr) minmax(0, 503fr); align-items: start; background: #dcdcdc; font-family: "Open Sans", "Noto Sans", sans-serif; font-size: 12px; color: #111; overflow: hidden; }
.win { min-width: 0; background: #fff; }
.front { position: relative; z-index: 1; box-sizing: border-box; border: solid #333; border-width: 1px 1px 1px 0; box-shadow: 0 2px 12px rgba(0, 0, 0, .5); }
button { border: 0; padding: 0; margin: 0; background: none; font: inherit; color: inherit; }
.titlebar { display: flex; align-items: center; height: 30px; background: #fff; }
.app { flex: none; margin-right: 5px; }
h1 { margin: 0; font-size: 12px; font-weight: 400; color: #8c8c8c; white-space: nowrap; font-family: Roboto, sans-serif; }
.controls { display: flex; align-items: center; align-self: stretch; margin-left: auto; }
.controls > button { width: 46px; height: 28px; display: flex; align-items: center; justify-content: center; }
.link { display: flex; align-self: flex-start; align-items: center; margin-right: 2px; }
.l { box-sizing: border-box; width: 34px; height: 20px; border: 2px solid #0078d7; background: #eee; color: #113; line-height: 14px; }
.bar { display: flex; align-items: center; height: 26px; background: linear-gradient(#fcfcfc, #efefef); overflow: hidden; white-space: nowrap; }
.bar.draw { height: 24px; background: #dbdbdb; }
.bar.last { height: 25px; }
.bar > button { flex: none; height: 100%; display: flex; align-items: center; justify-content: center; }
.bar > button svg { width: 16px; height: 16px; flex: none; overflow: visible; }
.bar > button.on { background: #808080; }
.bar > button.lite { background: #d9d9d9; }
.sep { flex: none; height: 16px; overflow: visible; }
.logo { flex: none; width: 17px; height: 16px; }
.brand { width: 83px; padding-left: 3px; font: italic bold 12px "Open Sans", sans-serif; }
.periods { display: flex; gap: 11px; font-family: Roboto, sans-serif; }
.bar > .pick { font-family: Roboto, sans-serif; font-size: 12px; justify-content: flex-start; }
.sym { box-sizing: border-box; width: 76px; padding: 0 4px 0 6px; }
.tpl { box-sizing: border-box; width: 185px; }
.bar > .pick svg { margin-left: auto; }
.site { margin-left: auto; padding-right: 5px; color: #777; text-decoration: none; }
.chart { display: block; width: 100%; height: auto; background: #f8f9fe; font: 11px "Liberation Sans", Arial, sans-serif; }
.b { font-weight: bold; }
.letter { font-size: 13px; }
.note { font-size: 13px; }
.dark { background: #000; }
.glow { mix-blend-mode: screen; }
.mark { font-family: "Open Sans", sans-serif; font-size: 12px; }
.flag { font-size: 12px; }
.comp { font-size: 13px; }
.big { font-size: 16px; }
.back .titlebar { height: 22px; }
.back .controls > button { height: 20px; }
.back .controls { padding-right: 2px; }
.strip { height: 26px; background: linear-gradient(#fdfdfd, #f0f0f0); }
.scroll { display: flex; background: #f0f0f0; }
.scroll button { width: 17px; display: flex; align-items: center; justify-content: center; }
.main-scroll { height: 23px; }
.main-scroll .thumb { flex: 1; margin-left: 22.6%; background: #cdcdcd; }
.side-scroll { height: 23px; border-top: 1px solid #fff; }
.side-scroll .thumb { flex: 1; margin-left: 69.8%; background: #cdcdcd; }
</style>
